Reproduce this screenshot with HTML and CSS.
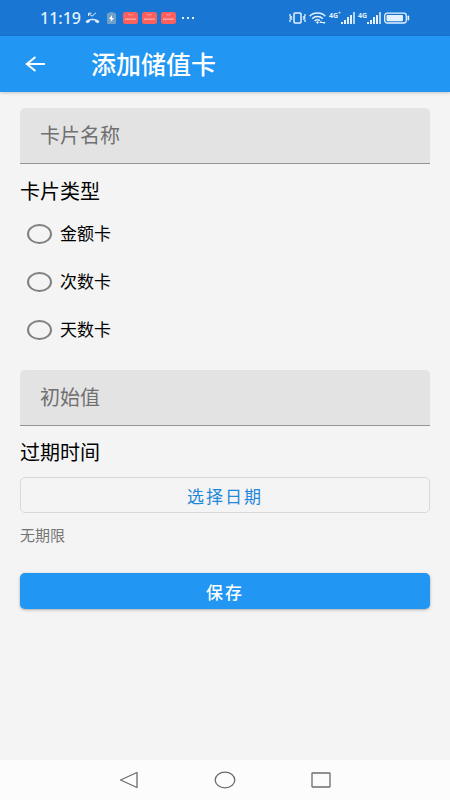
FILE: index.html
```html
<!DOCTYPE html>
<html lang="zh-CN">
<head>
<meta charset="utf-8">
<meta name="viewport" content="width=device-width, initial-scale=1">
<title>添加储值卡</title>
<link rel="stylesheet" href="styles.css">
</head>
<body>
<div class="status">
  <div class="status-left">
    <span class="clock">11:19</span>
    <svg class="missed" width="15" height="12" viewBox="0 0 15 12" fill="none" stroke="currentColor" aria-hidden="true">
      <path d="M3.500 4V1.200h3M3.800 1.500l3.200 2.700 4-3.400" stroke-width="1"/>
      <path d="M.5 9.600C3.500 5.800 11.500 5.800 14.500 9.600L13 11.200 10.200 10V8.600C8.500 8 6.500 8 4.800 8.600V10L2 11.200Z" fill="currentColor" stroke="none"/>
    </svg>
    <svg class="charge" width="9" height="12" viewBox="0 0 9 12" aria-hidden="true">
      <path d="M2.500 1V0h4v1H8q1 0 1 1v9q0 1-1 1H1q-1 0-1-1V2q0-1 1-1z" fill="#6f9fcb"/>
      <path d="M5 3 2 7h2L3.600 10 7 6H5z" fill="#fff"/>
    </svg>
    <span class="apps">
      <svg width="15" height="12" viewBox="0 0 15 12" aria-hidden="true"><rect width="15" height="12" rx="2.500" fill="#fb605f"/><path d="M5 2.200q2.500 2 5 0" fill="none" stroke="#ff9c98"/><path d="M2 7.300h11" stroke="#ffb4b0" stroke-width="1.600" stroke-dasharray="1.400 .3"/></svg>
      <svg width="15" height="12" viewBox="0 0 15 12" aria-hidden="true"><rect width="15" height="12" rx="2.500" fill="#fb605f"/><path d="M5 2.200q2.500 2 5 0" fill="none" stroke="#ff9c98"/><path d="M2 7.300h11" stroke="#ffb4b0" stroke-width="1.600" stroke-dasharray="1.400 .3"/></svg>
      <svg width="15" height="12" viewBox="0 0 15 12" aria-hidden="true"><rect width="15" height="12" rx="2.500" fill="#fb605f"/><path d="M5 2.200q2.500 2 5 0" fill="none" stroke="#ff9c98"/><path d="M2 7.300h11" stroke="#ffb4b0" stroke-width="1.600" stroke-dasharray="1.400 .3"/></svg>
    </span>
    <svg width="12" height="12" viewBox="0 0 12 12" fill="currentColor" aria-hidden="true"><path d="M0 5h2v2H0zM5 5h2v2H5zM10 5h2v2h-2z"/></svg>
  </div>
  <div class="status-right">
    <svg width="17" height="12" viewBox="0 0 17 12" fill="none" stroke="currentColor" aria-hidden="true">
      <rect x="5" y="1" width="7" height="10" rx="1" stroke-width="1.500"/>
      <path d="M1 2v2l1.500 1L1 6l1.500 1L1 8v2M16 2v2l-1.500 1L16 6l-1.500 1L16 8v2" stroke-width="1.300"/>
    </svg>
    <svg width="17" height="12" viewBox="0 0 17 12" fill="none" stroke="currentColor" aria-hidden="true">
      <path d="M.7 4.200C4.500 0 12.500 0 16.300 4.200M3.200 6.700C6 3.800 11 3.800 13.800 6.700M5.600 9C7.200 7.300 9.500 7.300 11 8.800" stroke-width="1.600"/>
      <path d="M7 10.200 8.500 9 10 10.200 8.500 12Z" fill="currentColor" stroke="none"/>
      <path d="M11 10.500h5M12.500 9 11 10.500M14.500 12l1.500-1.500"/>
    </svg>
    <span class="signal"><span class="net">4G<sup>+</sup></span>
      <svg width="14" height="12" viewBox="0 0 14 12" fill="currentColor" aria-hidden="true"><path d="M0 10h2v2H0zM3 8h2v4H3zM6 5h2v7H6zM9 3h2v9H9z"/><path d="M12 0h2v12h-2z" opacity=".75"/></svg>
    </span>
    <span class="signal"><span class="net">4G</span>
      <svg width="14" height="12" viewBox="0 0 14 12" fill="currentColor" aria-hidden="true"><path d="M0 10h2v2H0zM3 8h2v4H3zM6 5h2v7H6zM9 3h2v9H9z"/><path d="M12 0h2v12h-2z" opacity=".75"/></svg>
    </span>
    <svg width="26" height="12" viewBox="0 0 26 12" aria-hidden="true">
      <rect x=".7" y="1.200" width="21.600" height="9.800" rx="2.500" fill="none" stroke="currentColor" stroke-width="1.300"/>
      <rect x="2.500" y="3" width="16.500" height="6.200" rx="1" fill="currentColor"/>
      <rect x="23.500" y="3.500" width="1.700" height="5" rx=".8" fill="currentColor"/>
    </svg>
  </div>
</div>

<header class="appbar">
  <button class="back" type="button" aria-label="返回">
    <svg width="20" height="16" viewBox="0 0 20 16" fill="none" stroke="currentColor" stroke-width="2" aria-hidden="true"><path d="M20 8H2M10.500 1 1.800 8l8.700 7"/></svg>
  </button>
  <h1 class="title">添加储值卡</h1>
</header>

<main class="content">
  <form class="form">
    <input class="field" type="text" placeholder="卡片名称" aria-label="卡片名称">
    <fieldset class="types">
      <legend class="label">卡片类型</legend>
      <label class="option"><input class="radio" type="radio" name="type">金额卡</label>
      <label class="option"><input class="radio" type="radio" name="type">次数卡</label>
      <label class="option"><input class="radio" type="radio" name="type">天数卡</label>
    </fieldset>
    <input class="field" type="text" placeholder="初始值" aria-label="初始值">
    <h2 class="label expiry">过期时间</h2>
    <button class="btn outlined" type="button">选择日期</button>
    <p class="hint">无期限</p>
    <button class="btn filled" type="button">保存</button>
  </form>
</main>

<nav class="navbar">
  <button class="nav" type="button" aria-label="后退"><svg width="20" height="18" viewBox="0 0 20 18"><path d="M18 1.500v15L1.500 9z"/></svg></button>
  <button class="nav" type="button" aria-label="主页"><svg width="22" height="18" viewBox="0 0 22 18"><ellipse cx="11" cy="9" rx="9.800" ry="7.900"/></svg></button>
  <button class="nav" type="button" aria-label="最近任务"><svg width="20" height="18" viewBox="0 0 20 18"><rect x="1" y="2" width="18" height="14" rx=".5"/></svg></button>
</nav>
</body>
</html>
```

FILE: styles.css
```css
* {
  box-sizing: border-box;
}

body {
  margin: 0;
  min-height: 100vh;
  display: flex;
  flex-direction: column;
  background: #f4f4f4;
  color: #000;
  font-family: "Noto Sans", "Noto Sans CJK SC", sans-serif;
}

button,
input {
  font-family: inherit;
}

svg {
  display: block;
  flex: none;
}

.status {
  height: 36px;
  padding: 0 40px;
  display: flex;
  justify-content: space-between;
  align-items: center;
  background: #1976d2;
  color: #e3f1ff;
}

.status-left,
.status-right,
.apps {
  display: flex;
  align-items: center;
}

.clock {
  font-size: 16px;
  line-height: 20px;
  font-weight: 500;
}

.missed {
  margin: 0 7px 0 4px;
}

.apps {
  gap: 4px;
  margin: 0 6px 0 7px;
}

.status-right {
  gap: 3px;
}

.signal {
  display: flex;
}

.net {
  font-size: 7px;
  line-height: 7px;
  font-weight: 700;
}

.net sup {
  font-size: 5px;
  line-height: 1px;
}

.appbar {
  height: 56px;
  padding: 0 20px;
  display: flex;
  align-items: center;
  gap: 41px;
  background: #2196f3;
  color: #fff;
  box-shadow: 0 1px 3px rgba(0, 0, 0, 0.2);
}

.back {
  width: 30px;
  height: 40px;
  padding: 0;
  border: 0;
  display: grid;
  place-items: center;
  background: none;
  color: inherit;
}

.title {
  margin: 0;
  font-size: 25px;
  line-height: 32px;
  font-weight: 500;
}

.content {
  flex: 1;
  padding: 16px 20px;
}

.form {
  display: flex;
  flex-direction: column;
}

.field {
  width: 100%;
  height: 56px;
  padding: 0 20px;
  border: 0;
  border-bottom: 1px solid #949494;
  border-radius: 5px 5px 0 0;
  background: #e3e3e3;
  color: #000;
  font-size: 20px;
}

.field::placeholder {
  color: #707070;
  opacity: 1;
}

.types {
  min-width: 0;
  margin: 14px 0 16px;
  padding: 0;
  border: 0;
}

.label {
  margin: 0;
  padding: 0;
  font-size: 20px;
  line-height: 28px;
  font-weight: 400;
}

.types .label {
  padding-bottom: 4px;
}

.option {
  height: 48px;
  padding-left: 7px;
  display: flex;
  align-items: center;
  gap: 8px;
  font-size: 17px;
  line-height: 24px;
}

.radio {
  appearance: none;
  width: 25px;
  height: 20px;
  margin: 0;
  border: 2px solid #808080;
  border-radius: 50%;
}

.radio:checked {
  border-color: #2196f3;
  background: radial-gradient(#2196f3 45%, transparent 50%);
}

.expiry {
  margin: 13px 0 10px;
}

.btn {
  width: 100%;
  height: 36px;
  padding: 0;
  border: 0;
  border-radius: 5px;
  font-size: 17px;
  letter-spacing: 2px;
}

.outlined {
  border: 1px solid #d8d8d8;
  background: transparent;
  color: #1e88dc;
  font-weight: 400;
}

.hint {
  margin: 12px 0 28px;
  color: #757575;
  font-size: 15px;
  line-height: 20px;
}

.filled {
  background: #2196f3;
  color: #fff;
  font-weight: 500;
  box-shadow: 0 1px 3px rgba(0, 0, 0, 0.3);
}

.navbar {
  height: 40px;
  padding: 0 81px;
  display: flex;
  align-items: center;
  justify-content: space-around;
  background: #fcfcfc;
}

.nav {
  width: 40px;
  height: 40px;
  padding: 0;
  border: 0;
  display: grid;
  place-items: center;
  background: none;
}

.nav svg {
  fill: none;
  stroke: #6c6c6c;
  stroke-width: 1.3;
  stroke-linejoin: round;
}
```
